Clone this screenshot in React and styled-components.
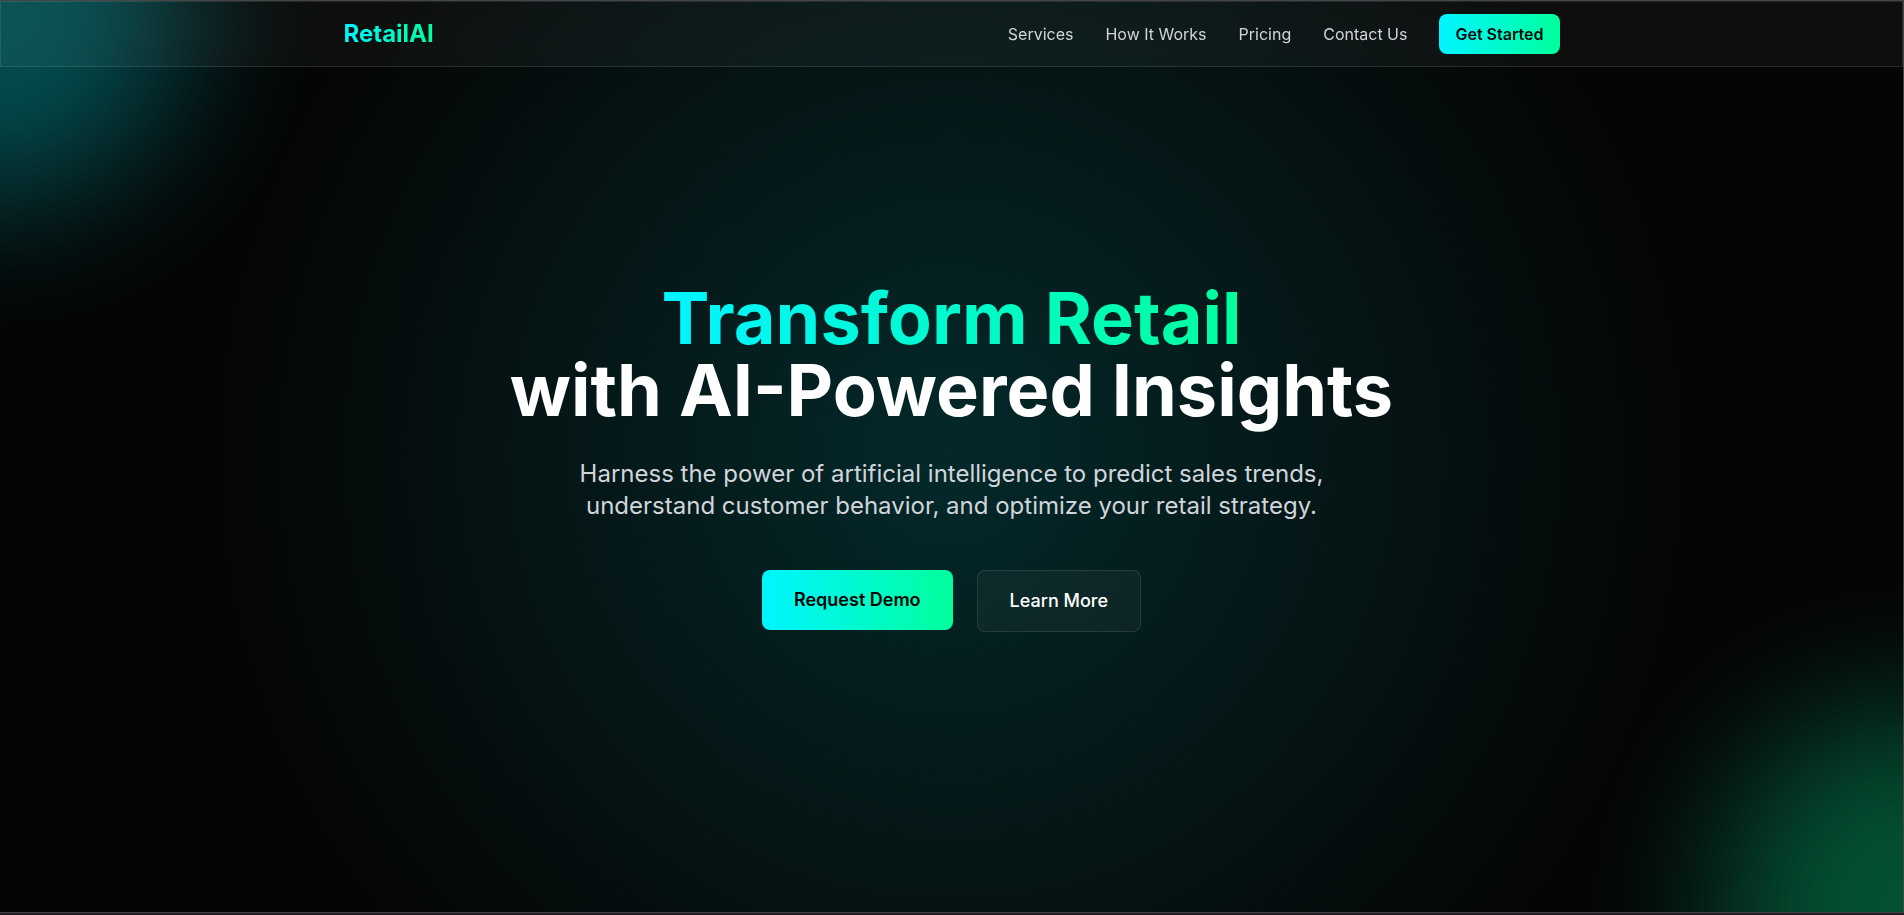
import React from "react";
import styled, { createGlobalStyle } from "styled-components";

const GlobalStyle = createGlobalStyle`
  *, *::before, *::after { box-sizing: border-box; }
  body {
    margin: 0;
    background: #241d24;
    color: #fff;
    font-family: Inter, "Liberation Sans", sans-serif;
    font-size: 16px;
    line-height: 24px;
    -webkit-font-smoothing: antialiased;
  }
  h1, p { margin: 0; }
  a { color: inherit; text-decoration: none; }
  button { font-family: inherit; cursor: pointer; }
`;

const accent = "linear-gradient(90deg, #00f5ff, #00ff9d)";

const Page = styled.div`
  display: flex;
  min-height: 100vh;
  padding-bottom: 2px;
`;

const Frame = styled.div`
  position: relative;
  display: grid;
  flex: 1;
  overflow: hidden;
  border: solid #454545;
  border-width: 1px 1px 1px 0;
  background: radial-gradient(circle at center, rgba(0, 245, 255, 0.15) 0%, transparent 70%), #050505;
`;

const Glow = styled.div`
  position: absolute;
  width: 384px;
  height: 384px;
  border-radius: 50%;
  opacity: 0.3;
  filter: blur(72px);
  background: ${(p) => p.$color};
  ${(p) => (p.$corner === "start" ? "top: -184px; left: -200px;" : "bottom: -184px; right: -200px;")}
`;

const Header = styled.header`
  grid-area: 1 / 1;
  align-self: start;
  z-index: 1;
  border: 1px solid rgba(255, 255, 255, 0.1);
  background: rgba(255, 255, 255, 0.04);
  backdrop-filter: blur(10px);
`;

const HeaderInner = styled.div`
  display: flex;
  align-items: center;
  justify-content: space-between;
  max-width: 1280px;
  height: 64px;
  margin: 0 auto;
  padding: 0 32px;
`;

const GradientText = styled.span`
  display: inline-block;
  color: transparent;
  background: ${accent};
  background-clip: text;
  -webkit-background-clip: text;
`;

const Logo = styled.a`
  font-size: 24px;
  font-weight: 700;
  line-height: 32px;
`;

const Nav = styled.nav`
  display: flex;
  align-items: center;
  gap: 32px;
`;

const NavLink = styled.a`
  color: #d1d5db;
`;

const Button = styled.button`
  padding: ${(p) => (p.$large ? "16px 32px" : "8px 16px")};
  border: ${(p) => (p.$glass ? "1px solid rgba(255, 255, 255, 0.1)" : "0")};
  border-radius: 8px;
  background: ${(p) => (p.$glass ? "rgba(255, 255, 255, 0.04)" : accent)};
  color: ${(p) => (p.$glass ? "#fff" : "#050505")};
  font-size: ${(p) => (p.$large ? "18px" : "16px")};
  font-weight: ${(p) => (p.$glass ? 500 : 600)};
  line-height: ${(p) => (p.$large ? "28px" : "24px")};
`;

const Hero = styled.main`
  grid-area: 1 / 1;
  position: relative;
  display: flex;
  flex-direction: column;
  align-items: center;
  justify-content: center;
  padding: 80px 32px;
  text-align: center;
`;

const Title = styled.h1`
  margin-bottom: 32px;
  font-size: 72px;
  font-weight: 700;
  line-height: 72px;
`;

const Lead = styled.p`
  max-width: 768px;
  margin-bottom: 48px;
  color: #d1d5db;
  font-size: 24px;
  line-height: 32px;
`;

const Actions = styled.div`
  display: flex;
  align-items: flex-start;
  gap: 24px;
`;

const links = ["Services", "How It Works", "Pricing", "Contact Us"];

export default function App() {
  return (
    <>
      <GlobalStyle />
      <Page>
        <Frame>
          <Glow $corner="start" $color="#00f5ff" />
          <Glow $corner="end" $color="#00ff9d" />
          <Header>
            <HeaderInner>
              <Logo href="#">
                <GradientText>RetailAI</GradientText>
              </Logo>
              <Nav>
                {links.map((label) => (
                  <NavLink key={label} href="#">{label}</NavLink>
                ))}
                <Button>Get Started</Button>
              </Nav>
            </HeaderInner>
          </Header>
          <Hero>
            <Title>
              <GradientText>Transform Retail</GradientText>
              <br />
              with AI-Powered Insights
            </Title>
            <Lead>
              Harness the power of artificial intelligence to predict sales trends, understand
              customer behavior, and optimize your retail strategy.
            </Lead>
            <Actions>
              <Button $large>Request Demo</Button>
              <Button $large $glass>Learn More</Button>
            </Actions>
          </Hero>
        </Frame>
      </Page>
    </>
  );
}
